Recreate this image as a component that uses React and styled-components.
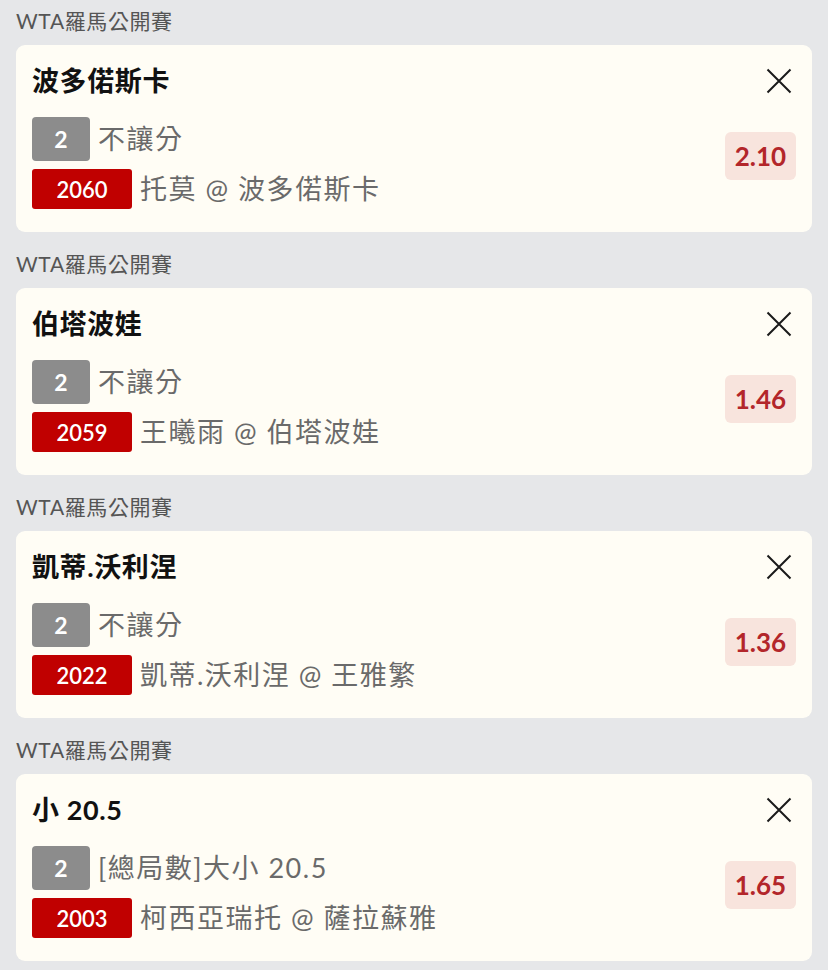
import React from 'react'
import styled, { createGlobalStyle } from 'styled-components'

const GlobalStyle = createGlobalStyle`
  html, body {
    margin: 0;
    padding: 0;
    background: #e6e7e9;
  }
  body {
    font-family: Lato, "Noto Sans CJK TC", sans-serif;
  }
`

const bets = [
  { league: 'WTA羅馬公開賽', title: '波多偌斯卡', no: '2', type: '不讓分', code: '2060', match: '托莫 @ 波多偌斯卡', odds: '2.10' },
  { league: 'WTA羅馬公開賽', title: '伯塔波娃', no: '2', type: '不讓分', code: '2059', match: '王曦雨 @ 伯塔波娃', odds: '1.46' },
  { league: 'WTA羅馬公開賽', title: '凱蒂.沃利涅', no: '2', type: '不讓分', code: '2022', match: '凱蒂.沃利涅 @ 王雅繁', odds: '1.36' },
  { league: 'WTA羅馬公開賽', title: '小 20.5', no: '2', type: '[總局數]大小 20.5', code: '2003', match: '柯西亞瑞托 @ 薩拉蘇雅', odds: '1.65' }
]

function BetSlip (props) {
  const { className } = props
  return (
    <div className={className}>
      {bets.map((bet, i) => (
        <Section key={i}>
          <League>{bet.league}</League>
          <Card>
            <TitleRow>
              <Title>{bet.title}</Title>
              <CloseButton aria-label='remove'>
                <svg width='26' height='26' viewBox='0 0 26 26'>
                  <path d='M1.5 1.5 L24.5 24.5 M24.5 1.5 L1.5 24.5' stroke='#1a1a1a' strokeWidth='2' fill='none' />
                </svg>
              </CloseButton>
            </TitleRow>
            <Body>
              <Lines>
                <Line>
                  <Badge $kind='grey'>{bet.no}</Badge>
                  <LineText>{bet.type}</LineText>
                </Line>
                <Line>
                  <Badge $kind='red'>{bet.code}</Badge>
                  <LineText>{bet.match}</LineText>
                </Line>
              </Lines>
              <Odds>{bet.odds}</Odds>
            </Body>
          </Card>
        </Section>
      ))}
    </div>
  )
}

const Section = styled.div`
  display: flex;
  flex-direction: column;
`

const League = styled.div`
  font-size: 21px;
  line-height: 24px;
  color: #555;
  letter-spacing: 0.6px;
  margin-bottom: 12px;
`

const Card = styled.div`
  background: #fffdf5;
  border-radius: 9px;
  padding: 18px 16px 23px;
  display: flex;
  flex-direction: column;
`

const TitleRow = styled.div`
  display: flex;
  align-items: center;
  justify-content: space-between;
  height: 36px;
`

const Title = styled.div`
  font-size: 27px;
  font-weight: 700;
  color: #111;
  line-height: 36px;
  letter-spacing: 0.6px;
`

const CloseButton = styled.div`
  width: 26px;
  height: 26px;
  margin-right: 4px;
  display: flex;
`

const Body = styled.div`
  display: flex;
  justify-content: space-between;
  align-items: flex-start;
  margin-top: 18px;
`

const Lines = styled.div`
  display: flex;
  flex-direction: column;
  gap: 8px;
`

const Line = styled.div`
  display: flex;
  align-items: center;
  gap: 8px;
`

const Badge = styled.div`
  display: flex;
  align-items: center;
  justify-content: center;
  color: #fff;
  font-weight: ${p => p.$kind === 'grey' ? 700 : 600};
  font-size: ${p => p.$kind === 'grey' ? '23px' : '22px'};
  width: ${p => p.$kind === 'grey' ? '58px' : '100px'};
  height: ${p => p.$kind === 'grey' ? '44px' : '40px'};
  border-radius: ${p => p.$kind === 'grey' ? '4px' : '3px'};
  background: ${p => p.$kind === 'grey' ? '#8c8c8c' : '#c00000'};
`

const LineText = styled.div`
  font-size: 27px;
  color: #6a6a6a;
  line-height: 36px;
  letter-spacing: 1.5px;
`

const Odds = styled.div`
  margin-top: 15px;
  height: 48px;
  min-width: 71px;
  box-sizing: border-box;
  padding: 0 8px;
  display: flex;
  align-items: center;
  justify-content: center;
  background: #f8e4dd;
  border-radius: 6px;
  color: #b3262a;
  font-size: 26px;
  font-weight: 700;
`

const StyledBetSlip = styled(BetSlip)`
  display: flex;
  flex-direction: column;
  gap: 20px;
  padding: 9px 16px 20px;
`

export default function App () {
  return (
    <>
      <GlobalStyle />
      <StyledBetSlip />
    </>
  )
}
